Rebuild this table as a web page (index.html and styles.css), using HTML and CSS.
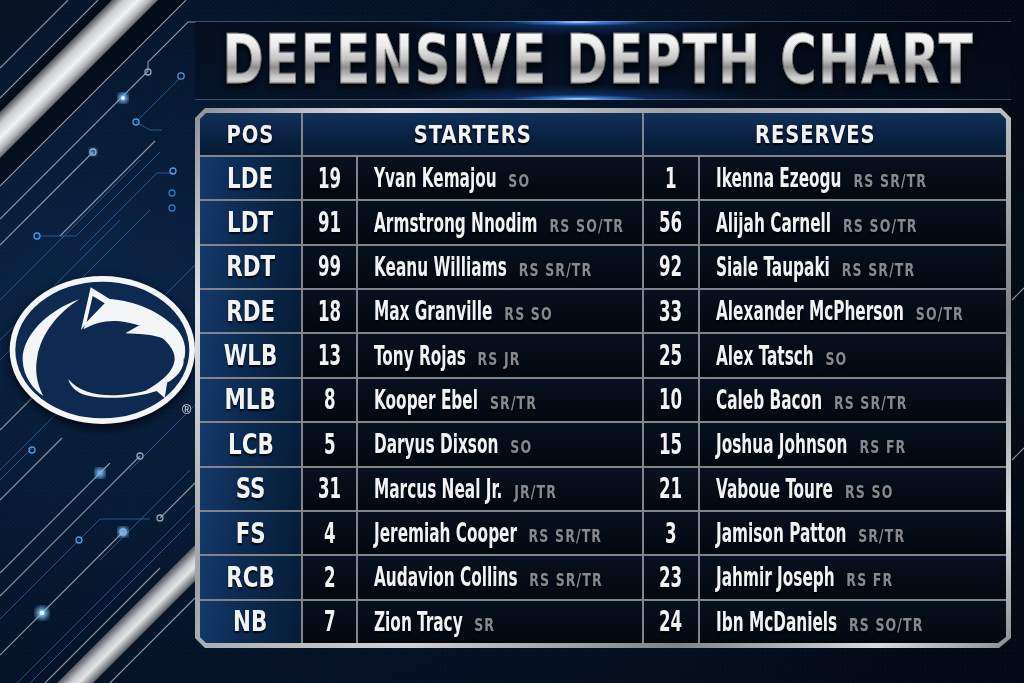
FILE: index.html
```html
<!DOCTYPE html>
<html lang="en">
<head>
<meta charset="utf-8">
<title>Defensive Depth Chart</title>
<link rel="stylesheet" href="styles.css">
</head>
<body>
<div class="page">
  <svg class="bg" width="1024" height="683" viewBox="0 0 1024 683" aria-hidden="true">
    <defs>
      <radialGradient id="bgG" cx="0.1" cy="0.45" r="0.95">
        <stop offset="0" stop-color="#0b2447"/>
        <stop offset="0.45" stop-color="#06152b"/>
        <stop offset="1" stop-color="#030a15"/>
      </radialGradient>
      <linearGradient id="silverA" gradientUnits="userSpaceOnUse" x1="56" y1="56" x2="80" y2="80">
        <stop offset="0" stop-color="#4f5459"/>
        <stop offset="0.25" stop-color="#c9ccd0"/>
        <stop offset="0.55" stop-color="#f1f2f3"/>
        <stop offset="0.8" stop-color="#aeb2b6"/>
        <stop offset="1" stop-color="#4a4e53"/>
      </linearGradient>
      <linearGradient id="silverB" gradientUnits="userSpaceOnUse" x1="370" y1="370" x2="388" y2="388">
        <stop offset="0" stop-color="#55595e"/>
        <stop offset="0.35" stop-color="#c4c7cb"/>
        <stop offset="0.6" stop-color="#e4e5e7"/>
        <stop offset="1" stop-color="#5c6065"/>
      </linearGradient>
      <pattern id="dots" width="5" height="5" patternUnits="userSpaceOnUse">
        <rect width="1" height="1" fill="#3a76b8"/>
        <rect x="3" y="2" width="1" height="1" fill="#1f4f86"/>
      </pattern>
      <filter id="blur"><feGaussianBlur stdDeviation="2.5"/></filter>
    </defs>
    <rect width="1024" height="683" fill="url(#bgG)"/>
    <rect width="1024" height="683" fill="url(#dots)" opacity="0.1"/>
    <polygon points="0,0 68,0 0,68" fill="#06101f" opacity="0.6"/>
    <polygon points="98,0 112,0 0,112 0,98" fill="#030912" opacity="0.7"/>
    <polygon points="158,0 186,0 0,186 0,158" fill="#030912" opacity="0.7"/>
    <polygon points="0,112 112,0 158,0 0,158" fill="url(#silverA)"/>
    <polygon points="195,545 195,581 93,683 57,683" fill="url(#silverB)"/>
    <g stroke="#c4ccd6" stroke-width="1.1" fill="none" opacity="0.7">
      <path d="M0 68 L68 0"/>
      <path d="M0 98 L98 0"/>
      <path d="M0 186 L186 0"/>
      <path d="M0 219 L148 71 L148 62 L188 22 L196 22"/>
      <path d="M0 245 L93 152"/>
      <path d="M60 236 L155 141"/>
      <path d="M0 500 L62 438"/>
      <path d="M0 573 L110 463"/>
      <path d="M0 596 L140 456"/>
      <path d="M0 655 L123 532"/>
      <path d="M45 683 L160 568"/>
      <path d="M110 683 L195 598"/>
      <path d="M160 518 L195 483"/>
      <path d="M0 430 L90 340"/>
      <path d="M1012 300 L1024 288"/>
      <path d="M1012 460 L1024 448"/>
    </g>
    <g stroke="#2a6db3" stroke-width="1" fill="none" opacity="0.75">
      <path d="M136 122 L181 77"/>
      <path d="M136 122 L150 130 L162 130"/>
      <path d="M0 300 L140 160"/>
      <path d="M80 250 L157 173 L173 173"/>
      <path d="M37 236 L76 236 L160 152"/>
      <path d="M0 340 L120 220"/>
      <path d="M0 360 L150 210"/>
      <path d="M0 480 L32 448"/>
      <path d="M0 470 L120 350"/>
      <path d="M79 540 L100 519 L150 519"/>
      <path d="M79 540 L0 619"/>
      <path d="M30 683 L190 523"/>
      <path d="M0 700 L195 505"/>
      <path d="M130 470 L195 405"/>
      <path d="M100 560 L190 470"/>
      <path d="M160 300 L195 265"/>
    </g>
    <g fill="none" stroke="#8fa6bf" stroke-width="1.3">
      <circle cx="148" cy="72" r="3"/>
      <circle cx="181" cy="76" r="3.2" stroke="#4b9be6"/>
      <circle cx="136" cy="122" r="3" stroke="#4b9be6"/>
      <circle cx="93" cy="152" r="3"/>
      <circle cx="173" cy="171" r="3" stroke="#4b9be6"/>
      <circle cx="37" cy="236" r="3" stroke="#4b9be6"/>
      <circle cx="32" cy="450" r="3" stroke="#4b9be6"/>
      <circle cx="140" cy="456" r="3"/>
      <circle cx="79" cy="540" r="3" stroke="#4b9be6"/>
      <circle cx="123" cy="532" r="3"/>
      <circle cx="160" cy="518" r="3"/>
      <circle cx="172" cy="193" r="3" stroke="#2f78c4"/>
      <circle cx="172" cy="208" r="3" stroke="#2f78c4"/>
    </g>
    <g fill="#7cc4ff">
      <circle cx="123" cy="98" r="5" filter="url(#blur)"/>
      <circle cx="123" cy="98" r="2" fill="#eaf6ff"/>
      <circle cx="100" cy="473" r="5" filter="url(#blur)"/>
      <circle cx="42" cy="613" r="6" filter="url(#blur)"/>
      <circle cx="42" cy="613" r="2.4" fill="#eaf6ff"/>
      <circle cx="123" cy="532" r="5" filter="url(#blur)"/>
      <circle cx="93" cy="152" r="4" filter="url(#blur)" opacity="0.6"/>
    </g>
  </svg>

  <aside class="side">
    <svg class="logo" width="195" height="180" viewBox="0 0 585 540" aria-label="Penn State Nittany Lion logo">
      <ellipse cx="307" cy="270" rx="278" ry="222" fill="#f4f5f7"/>
      <ellipse cx="307" cy="270" rx="261" ry="205" fill="#0f2a50"/>
      <g fill="#f4f5f7">
        <path d="M238 118 C140 152 66 230 68 300 C70 350 98 387 130 408 C110 370 104 330 112 290 C124 222 172 160 238 118 Z"/>
        <path d="M243 210 L272 82 L334 120 L300 140 Z"/>
        <path d="M300 116 C388 114 472 150 522 198 C552 228 562 262 552 300 C540 262 515 238 480 220 C440 200 400 190 360 184 C320 180 285 188 250 208 L262 180 C275 150 286 126 300 116 Z"/>
        <path d="M376 220 L418 196 L450 200 C482 206 512 226 532 252 C500 236 460 224 420 222 Z"/>
        <path d="M448 205 C504 222 548 260 551 298 C553 334 520 364 470 384 L436 392 C488 364 520 334 524 300 C527 266 494 236 448 205 Z"/>
        <path d="M205 358 C236 395 290 410 360 405 C420 400 470 386 502 366 L494 414 L470 393 C400 416 292 422 240 399 C222 389 210 376 205 358 Z"/>
      </g>
      <path d="M260 186 L278 108 L314 130 Z" fill="#0f2a50"/>
      <text x="560" y="463" font-size="38" fill="#e8eaee" text-anchor="middle" font-family="Liberation Sans, sans-serif">®</text>
    </svg>
  </aside>

  <main class="main">
    <div class="title-bar">
      <h1 class="title">DEFENSIVE DEPTH CHART</h1>
    </div>
    <div class="frame">
      <div class="chart">
        <div class="cell hd pos-h"><span class="h">POS</span></div>
        <div class="cell hd span2"><span class="h">STARTERS</span></div>
        <div class="cell hd span2 res-h"><span class="h">RESERVES</span></div>

        <div class="cell pos"><span class="p">LDE</span></div>
        <div class="cell num"><span class="n">19</span></div>
        <div class="cell name"><span class="line">Yvan Kemajou<span class="tag">SO</span></span></div>
        <div class="cell num"><span class="n">1</span></div>
        <div class="cell name"><span class="line">Ikenna Ezeogu<span class="tag">RS SR/TR</span></span></div>

        <div class="cell pos"><span class="p">LDT</span></div>
        <div class="cell num"><span class="n">91</span></div>
        <div class="cell name"><span class="line">Armstrong Nnodim<span class="tag">RS SO/TR</span></span></div>
        <div class="cell num"><span class="n">56</span></div>
        <div class="cell name"><span class="line">Alijah Carnell<span class="tag">RS SO/TR</span></span></div>

        <div class="cell pos"><span class="p">RDT</span></div>
        <div class="cell num"><span class="n">99</span></div>
        <div class="cell name"><span class="line">Keanu Williams<span class="tag">RS SR/TR</span></span></div>
        <div class="cell num"><span class="n">92</span></div>
        <div class="cell name"><span class="line">Siale Taupaki<span class="tag">RS SR/TR</span></span></div>

        <div class="cell pos"><span class="p">RDE</span></div>
        <div class="cell num"><span class="n">18</span></div>
        <div class="cell name"><span class="line">Max Granville<span class="tag">RS SO</span></span></div>
        <div class="cell num"><span class="n">33</span></div>
        <div class="cell name"><span class="line">Alexander McPherson<span class="tag">SO/TR</span></span></div>

        <div class="cell pos"><span class="p">WLB</span></div>
        <div class="cell num"><span class="n">13</span></div>
        <div class="cell name"><span class="line">Tony Rojas<span class="tag">RS JR</span></span></div>
        <div class="cell num"><span class="n">25</span></div>
        <div class="cell name"><span class="line">Alex Tatsch<span class="tag">SO</span></span></div>

        <div class="cell pos"><span class="p">MLB</span></div>
        <div class="cell num"><span class="n">8</span></div>
        <div class="cell name"><span class="line">Kooper Ebel<span class="tag">SR/TR</span></span></div>
        <div class="cell num"><span class="n">10</span></div>
        <div class="cell name"><span class="line">Caleb Bacon<span class="tag">RS SR/TR</span></span></div>

        <div class="cell pos"><span class="p">LCB</span></div>
        <div class="cell num"><span class="n">5</span></div>
        <div class="cell name"><span class="line">Daryus Dixson<span class="tag">SO</span></span></div>
        <div class="cell num"><span class="n">15</span></div>
        <div class="cell name"><span class="line">Joshua Johnson<span class="tag">RS FR</span></span></div>

        <div class="cell pos"><span class="p">SS</span></div>
        <div class="cell num"><span class="n">31</span></div>
        <div class="cell name"><span class="line">Marcus Neal Jr.<span class="tag">JR/TR</span></span></div>
        <div class="cell num"><span class="n">21</span></div>
        <div class="cell name"><span class="line">Vaboue Toure<span class="tag">RS SO</span></span></div>

        <div class="cell pos"><span class="p">FS</span></div>
        <div class="cell num"><span class="n">4</span></div>
        <div class="cell name"><span class="line">Jeremiah Cooper<span class="tag">RS SR/TR</span></span></div>
        <div class="cell num"><span class="n">3</span></div>
        <div class="cell name"><span class="line">Jamison Patton<span class="tag">SR/TR</span></span></div>

        <div class="cell pos"><span class="p">RCB</span></div>
        <div class="cell num"><span class="n">2</span></div>
        <div class="cell name"><span class="line">Audavion Collins<span class="tag">RS SR/TR</span></span></div>
        <div class="cell num"><span class="n">23</span></div>
        <div class="cell name"><span class="line">Jahmir Joseph<span class="tag">RS FR</span></span></div>

        <div class="cell pos"><span class="p">NB</span></div>
        <div class="cell num"><span class="n">7</span></div>
        <div class="cell name"><span class="line">Zion Tracy<span class="tag">SR</span></span></div>
        <div class="cell num"><span class="n">24</span></div>
        <div class="cell name"><span class="line">Ibn McDaniels<span class="tag">RS SO/TR</span></span></div>
      </div>
    </div>
  </main>
</div>
</body>
</html>
```

FILE: styles.css
```css
html, body {
  margin: 0;
  padding: 0;
  background: #040b17;
}

.page {
  position: relative;
  width: 1024px;
  height: 683px;
  overflow: hidden;
  display: flex;
  font-family: "DejaVu Sans Condensed", "Liberation Sans", sans-serif;
  color: #f1f2f4;
}

.bg {
  position: absolute;
  left: 0;
  top: 0;
}

.side {
  position: relative;
  flex: none;
  width: 195px;
  padding-top: 260px;
  box-sizing: border-box;
}

.logo {
  display: block;
  overflow: visible;
  filter: drop-shadow(0 4px 6px rgba(0, 0, 0, 0.8));
}

.main {
  position: relative;
  flex: none;
  width: 816px;
  padding-top: 21px;
  display: flex;
  flex-direction: column;
}

.title-bar {
  height: 77px;
  margin-bottom: 8px;
  border-top: 1px solid rgba(120, 160, 200, 0.45);
  border-bottom: 1px solid rgba(120, 160, 200, 0.45);
  display: flex;
  align-items: center;
  justify-content: center;
  padding-right: 10px;
  background:
    radial-gradient(70px 4px at 47% 0, #d8efff 0%, rgba(70, 150, 255, 0.8) 35%, rgba(20, 80, 200, 0) 100%),
    radial-gradient(70px 4px at 47% 100%, #d8efff 0%, rgba(70, 150, 255, 0.8) 35%, rgba(20, 80, 200, 0) 100%),
    radial-gradient(180px 14px at 47% 0, rgba(40, 120, 255, 0.35), rgba(0, 0, 0, 0) 100%),
    radial-gradient(180px 14px at 47% 100%, rgba(40, 120, 255, 0.35), rgba(0, 0, 0, 0) 100%),
    linear-gradient(180deg, rgba(3, 9, 20, 0.6), rgba(5, 14, 30, 0.5));
}

.title {
  flex: none;
  margin: 0;
  font-size: 67px;
  line-height: 1;
  font-weight: 700;
  letter-spacing: 2px;
  white-space: nowrap;
  transform: scaleX(0.822);
  background: linear-gradient(180deg, #ffffff 0%, #ececec 28%, #c4c4c4 48%, #8e8e8e 60%, #d6d6d6 78%, #7a7a7a 100%);
  -webkit-background-clip: text;
  background-clip: text;
  color: transparent;
  -webkit-text-stroke: 1px rgba(50, 50, 50, 0.55);
  filter: drop-shadow(0 3px 3px rgba(0, 0, 0, 0.9));
}

.frame {
  width: 816px;
  height: 540px;
  padding: 5px;
  box-sizing: border-box;
  background: linear-gradient(135deg, #8d9196 0%, #e2e4e6 15%, #9ea2a6 35%, #cfd2d5 55%, #7f8388 75%, #d8dadc 90%, #8a8e92 100%);
  clip-path: polygon(10px 0, calc(100% - 10px) 0, 100% 10px, 100% calc(100% - 10px), calc(100% - 12px) 100%, 10px 100%, 0 calc(100% - 10px), 0 10px);
}

.chart {
  height: 100%;
  display: grid;
  grid-template-columns: 101px 53px 284px 54px 1fr;
  grid-template-rows: 42px repeat(11, 1fr);
  gap: 2px;
  background: #80858b;
  clip-path: polygon(6px 0, calc(100% - 6px) 0, 100% 6px, 100% calc(100% - 6px), calc(100% - 8px) 100%, 6px 100%, 0 calc(100% - 6px), 0 6px);
}

.cell {
  display: flex;
  align-items: center;
  overflow: hidden;
  white-space: nowrap;
  text-shadow: 0 2px 2px rgba(0, 0, 0, 0.85);
}

.hd {
  justify-content: center;
  font-size: 25px;
  font-weight: 700;
  letter-spacing: 1px;
  background: linear-gradient(180deg, #113059 0%, #0a2142 55%, #081a34 100%);
}

.h {
  display: inline-block;
  transform: scaleX(0.87);
}

.span2 {
  grid-column: span 2;
}

.res-h {
  padding-right: 20px;
}

.pos {
  justify-content: center;
  font-size: 28px;
  font-weight: 700;
  background: linear-gradient(100deg, #14396a 0%, #0c2a50 45%, #071b36 100%);
}

.p {
  display: inline-block;
  transform: scaleX(0.85);
}

.num {
  justify-content: center;
  background: linear-gradient(180deg, #07101f 0%, #03080f 100%);
}

.n {
  display: inline-block;
  font-size: 28px;
  font-weight: 700;
  transform: scaleX(0.66);
}

.name {
  padding-left: 16px;
  background: linear-gradient(180deg, #07101f 0%, #03080f 100%);
}

.line {
  display: inline-block;
  font-size: 26px;
  font-weight: 700;
  transform: scaleX(0.655);
  transform-origin: left center;
}

.tag {
  display: inline-block;
  margin-left: 18px;
  font-size: 18.5px;
  letter-spacing: 1.5px;
  color: #868a90;
  transform: scaleX(1.15);
  transform-origin: left center;
}
```
